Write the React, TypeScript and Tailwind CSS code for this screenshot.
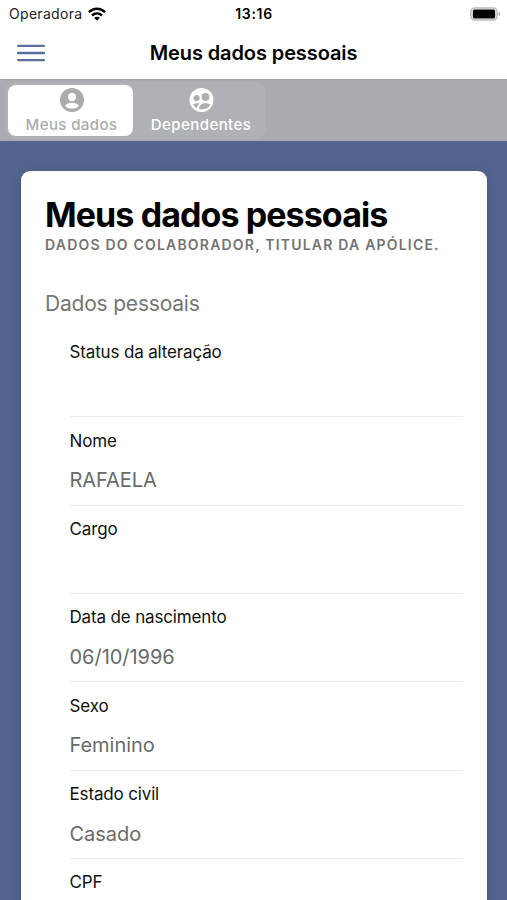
const fields = [
  { label: "Status da alteração", value: "" },
  { label: "Nome", value: "RAFAELA" },
  { label: "Cargo", value: "" },
  { label: "Data de nascimento", value: "06/10/1996" },
  { label: "Sexo", value: "Feminino" },
  { label: "Estado civil", value: "Casado" },
  { label: "CPF", value: "" },
];

function WifiIcon() {
  return (
    <svg width="18" height="14" viewBox="0 0 18 14" fill="none" stroke="#000" strokeWidth="2.5">
      <path d="M0.9 5.2C5.5 0.6 12.5 0.6 17.1 5.2" />
      <path d="M4 8.5C6.9 5.7 11.1 5.7 14 8.5" />
      <path d="M9 13.8L6.1 10.8C7.7 9.3 10.3 9.3 11.9 10.8Z" fill="#000" stroke="none" />
    </svg>
  );
}

function BatteryIcon() {
  return (
    <svg width="31" height="14" viewBox="0 0 31 14">
      <rect x="0.9" y="0.9" width="26.2" height="12.2" rx="3.8" fill="#fff" stroke="#b8b8b8" strokeWidth="1.5" />
      <rect x="2.8" y="2.4" width="22.4" height="9.2" rx="1.6" fill="#000" />
      <path d="M28.7 4.8C30.8 5.6 30.8 8.4 28.7 9.2Z" fill="#a6a6a6" />
    </svg>
  );
}

function PersonIcon() {
  return (
    <svg width="24" height="24" viewBox="0 0 24 24" className="shrink-0">
      <circle cx="12" cy="12" r="12" fill="#a9abae" />
      <circle cx="12" cy="9" r="4.2" fill="#fff" />
      <path d="M5 18C6.2 15.7 9 14.7 12 14.7S17.8 15.7 19 18C17.2 19.7 14.7 20.6 12 20.6S6.8 19.7 5 18Z" fill="#fff" />
    </svg>
  );
}

function DependentsIcon() {
  return (
    <svg width="25" height="24" viewBox="0 0 24 24" className="shrink-0">
      <circle cx="12" cy="12" r="12" fill="#fff" />
      <g fill="#adafb2">
        <circle cx="7.1" cy="10.1" r="3.1" />
        <circle cx="16" cy="9" r="3.9" />
        <path d="M3.6 16.2C5.4 15.1 8.4 15 10.4 15.6C8.6 16.8 7.8 18.2 7.4 20.1C5.8 19.2 4.5 17.8 3.6 16.2Z" />
        <path d="M9.4 20.4C9.9 17.2 12.7 15.3 16 15.3C18.2 15.3 20 15.9 20.9 16.8C18.6 20.8 13.8 22.4 9.4 20.4Z" />
      </g>
    </svg>
  );
}

export default function App() {
  return (
    <div className="flex h-[900px] w-[507px] flex-col overflow-hidden bg-[#52658e] font-['Inter','Liberation_Sans',sans-serif] text-black">
      <div className="grid h-[27px] shrink-0 grid-cols-3 items-center bg-white pr-[6px] pl-[9px]">
        <div className="flex items-center gap-[6px]">
          <span className="text-[14px] tracking-[0.3px] text-[#222]">Operadora</span>
          <WifiIcon />
        </div>
        <span className="pr-[2px] text-center text-[14px] font-semibold tracking-[0.7px]">13:16</span>
        <div className="flex justify-end">
          <BatteryIcon />
        </div>
      </div>
      <header className="grid h-[52px] shrink-0 grid-cols-[1fr_auto_1fr] items-center bg-white px-[17px] pb-[1px]">
        <button aria-label="Menu" className="w-7">
          <svg width="28" height="18" viewBox="0 0 28 18" stroke="#5c6f9c" strokeWidth="2.3" strokeLinecap="round">
            <path d="M1 1.9H27M1 9H27M1 16.1H27" />
          </svg>
        </button>
        <h1 className="text-[20px] font-semibold tracking-[-0.1px]">Meus dados pessoais</h1>
        <span />
      </header>
      <nav className="flex h-[62px] shrink-0 border-t border-[#a0a2a4] bg-[#a9abae] pt-[2px] pb-[2px] pl-[5px]">
        <div className="flex rounded-[10px] bg-[#afb1b4] p-[3px]">
          <button className="flex h-[51px] w-[125px] flex-col items-center rounded-[8px] bg-white pt-[3px] pl-[2px] text-[#a9abae]">
            <PersonIcon />
            <span className="mt-[3px] text-[15px] leading-[20px] font-medium tracking-[0.4px]">Meus dados</span>
          </button>
          <button className="flex h-[51px] w-[130px] flex-col items-center pt-[3px] pl-[6px] text-white">
            <DependentsIcon />
            <span className="mt-[3px] text-[15px] leading-[20px] font-medium tracking-[0.45px]">Dependentes</span>
          </button>
        </div>
      </nav>
      <main className="mt-[30px] mr-5 ml-[20.5px] flex flex-1 flex-col rounded-t-[9px] bg-white px-[24.5px] shadow-[0_3px_10px_rgba(0,0,0,0.16)]">
        <h2 className="mt-[24px] text-[34px] leading-[40px] font-bold tracking-[-0.91px] whitespace-nowrap">Meus dados pessoais</h2>
        <p className="mt-[1px] text-[14px] leading-[18px] font-semibold tracking-[1.2px] whitespace-nowrap text-[#737373]">DADOS DO COLABORADOR, TITULAR DA APÓLICE.</p>
        <h3 className="mt-[36px] text-[21px] leading-[28px] tracking-[-0.2px] text-[#757575]">Dados pessoais</h3>
        <div className="mt-[11px] ml-[24.5px] flex flex-col">
          {fields.map((f) => (
            <div key={f.label} className="h-[88.35px] shrink-0 border-b border-[#ececec] pt-[11.2px]">
              <div className="text-[17px] leading-[24px] tracking-[-0.15px] text-[#111]">{f.label}</div>
              <div className="mt-[13.8px] text-[20px] leading-[28px] tracking-[-0.03px] text-[#6a6a6a]">{f.value}</div>
            </div>
          ))}
        </div>
      </main>
    </div>
  );
}
